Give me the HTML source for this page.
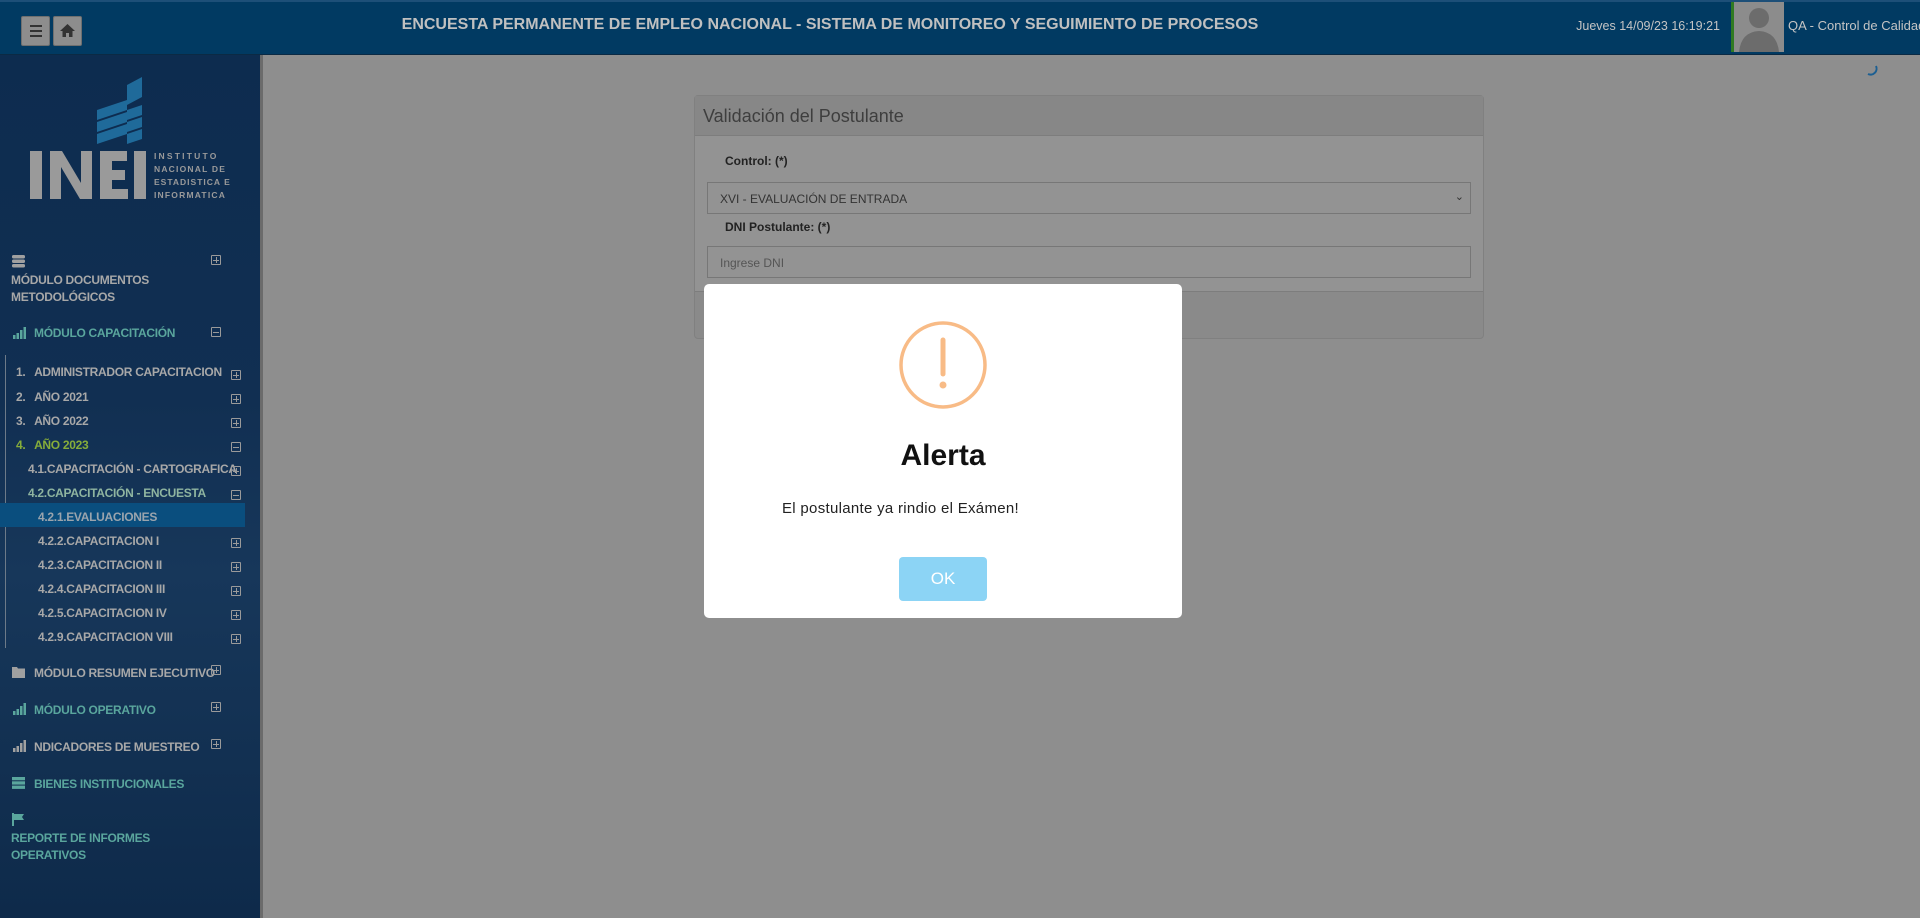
<!DOCTYPE html>
<html><head><meta charset="utf-8"><style>
*{margin:0;padding:0;box-sizing:border-box}
body{width:1920px;height:918px;overflow:hidden;background:#8e8e8e;font-family:"Liberation Sans",sans-serif;position:relative}
.hdr{position:absolute;left:0;top:0;width:1920px;height:55px;background:#013a62;border-top:2px solid #1d4f78;border-bottom:1px solid #0b2a44}
.btn{position:absolute;top:14px;width:29px;height:30px;background:#8d8d8d;border:1px solid #6f6f6f;border-radius:2px}
.title{position:absolute;left:0;width:1660px;top:14px;text-align:center;color:#c0c0c0;font-weight:bold;font-size:16px}
.side{position:absolute;left:0;top:55px;width:260px;height:863px;background:linear-gradient(180deg,#0d2c4f 0%,#112f52 40%,#17375a 60%,#0e2a4a 100%)}
.sb{position:absolute;left:260px;top:55px;width:3px;height:863px;background:#6b6b6b}
.it{position:absolute;font-weight:bold;font-size:12px;letter-spacing:-0.3px;color:#a8a8a8;white-space:nowrap}
.teal{color:#5aa69d}.grn{color:#86ad3a}
.pl{position:absolute;width:10px;height:10px;border:1px solid #9a9a9a;border-radius:1px}
.pl:before{content:"";position:absolute;left:1px;right:1px;top:3.5px;height:1px;background:#9a9a9a}
.pl.p:after{content:"";position:absolute;top:1px;bottom:1px;left:3.5px;width:1px;background:#9a9a9a}
.panel{position:absolute;left:694px;top:95px;width:790px;height:244px;border:1px solid #808080;border-radius:4px;background:#8a8a8a}
.ph{height:40px;border-bottom:1px solid #7d7d7d;color:#3e3e3e;font-size:18px;padding:10px 8px;background:#878787}
.pb{height:156px;background:#939393;border-bottom:1px solid #7d7d7d;position:relative}
.lbl{position:absolute;left:30px;font-size:12px;font-weight:bold;color:#222}
.inp{position:absolute;left:12px;width:764px;height:32px;border:1px solid #777;font-size:12px;color:#333;padding:9px 12px}
.dlg{position:absolute;left:704px;top:284px;width:478px;height:334px;background:#fff;border-radius:5px}
</style></head><body>
<div class="hdr">
 <div class="btn" style="left:21px"><div style="position:absolute;left:8px;top:8px;width:12px;height:2px;background:#333;box-shadow:0 5px 0 #333,0 10px 0 #333"></div></div>
 <div class="btn" style="left:53px"><svg width="29" height="30" viewBox="0 0 29 30" style="position:absolute;left:-1px;top:-1px"><path d="M7 15 L14.5 8 L22 15 H19.5 V21 H16 V17 H13 V21 H9.5 V15 Z" fill="#333"/></svg></div>
 <div class="title">ENCUESTA PERMANENTE DE EMPLEO NACIONAL - SISTEMA DE MONITOREO Y SEGUIMIENTO DE PROCESOS</div>
 <div style="position:absolute;right:200px;top:17px;color:#c4c4c4;font-size:12.5px">Jueves 14/09/23 16:19:21</div>
 <div style="position:absolute;left:1731px;top:0;width:53px;height:50px;background:#8c8c8c;border-left:3px solid #2f7a22;overflow:hidden">
  <svg width="50" height="50" viewBox="0 0 50 50"><circle cx="25" cy="16" r="10" fill="#6c6c6c"/><path d="M5 50 Q7 30 25 29 Q43 30 45 50Z" fill="#6c6c6c"/></svg></div>
 <div style="position:absolute;left:1788px;top:16px;color:#c4c4c4;font-size:13px;white-space:nowrap">QA - Control de Calidad</div>
</div>
<div class="side">
 <svg width="260" height="160" style="position:absolute;left:0;top:0">
  <g fill="#1f6a9a"><polygon points="127,30 142,22 142,42 127,50"/><polygon points="97,55 127,45 127,55 97,65"/><polygon points="97,67 127,57 127,67 97,77"/><polygon points="97,79 127,69 127,79 97,89"/><polygon points="127,55 142,50 142,60 127,65"/><polygon points="127,67 142,62 142,72 127,77"/><polygon points="127,79 142,74 142,84 127,89"/></g>
  <g fill="#9a9a9a"><rect x="30" y="96" width="12" height="48"/><polygon points="50,96 62,96 81,128 81,96 92,96 92,144 80,144 61,112 61,144 50,144"/><polygon points="100,96 127,96 127,106 112,106 112,115 125,115 125,125 112,125 112,134 128,134 128,144 100,144"/><rect x="134" y="96" width="12" height="48"/></g>
  <g fill="#9a9a9a" font-size="8.5" font-weight="bold" letter-spacing="2.2"><text x="154" y="104">INSTITUTO</text><text x="154" y="117" letter-spacing="1.2">NACIONAL DE</text><text x="154" y="130" letter-spacing="1">ESTADISTICA E</text><text x="154" y="143" letter-spacing="1.2">INFORMATICA</text></g>
 </svg>
</div>
<div class="sb"></div>
<div style="position:absolute;left:5px;top:355px;width:1px;height:293px;background:#6d7a88"></div>
<div style="position:absolute;left:0;top:503px;width:245px;height:24px;background:#0a4e7e"></div>
<svg width="16" height="14" style="position:absolute;left:12px;top:255px"><g fill="#a0a0a0"><rect x="0" y="0" width="13" height="3.5" rx="1.5"/><rect x="0" y="4.5" width="13" height="3.5" rx="1.5"/><rect x="0" y="9" width="13" height="3.5" rx="1.5"/></g></svg>
<div class="it" style="left:11px;top:272px;line-height:17px">MÓDULO DOCUMENTOS<br>METODOLÓGICOS</div>
<div class="pl p" style="left:211px;top:255px"></div>
<svg width="14" height="12" style="position:absolute;left:13px;top:327px"><g fill="#5aa69d"><rect x="0" y="8" width="2.5" height="4"/><rect x="3.5" y="6" width="2.5" height="6"/><rect x="7" y="3" width="2.5" height="9"/><rect x="10.5" y="0" width="2.5" height="12"/></g></svg>
<div class="it teal" style="left:34px;top:326px">MÓDULO CAPACITACIÓN</div>
<div class="pl" style="left:211px;top:327px"></div>
<div class="it" style="left:16px;top:365px">1.&nbsp;&nbsp; ADMINISTRADOR CAPACITACION</div><div class="pl p" style="left:231px;top:370px"></div>
<div class="it" style="left:16px;top:390px">2.&nbsp;&nbsp; AÑO 2021</div><div class="pl p" style="left:231px;top:394px"></div>
<div class="it" style="left:16px;top:414px">3.&nbsp;&nbsp; AÑO 2022</div><div class="pl p" style="left:231px;top:418px"></div>
<div class="it grn" style="left:16px;top:438px">4.&nbsp;&nbsp; AÑO 2023</div><div class="pl" style="left:231px;top:442px"></div>
<div class="it" style="left:28px;top:462px">4.1.CAPACITACIÓN - CARTOGRAFICA</div><div class="pl p" style="left:231px;top:466px"></div>
<div class="it" style="left:28px;top:486px;color:#8fb5a0">4.2.CAPACITACIÓN - ENCUESTA</div><div class="pl" style="left:231px;top:490px"></div>
<div class="it" style="left:38px;top:510px;color:#9aa4ad">4.2.1.EVALUACIONES</div>
<div class="it" style="left:38px;top:534px">4.2.2.CAPACITACION I</div><div class="pl p" style="left:231px;top:538px"></div>
<div class="it" style="left:38px;top:558px">4.2.3.CAPACITACION II</div><div class="pl p" style="left:231px;top:562px"></div>
<div class="it" style="left:38px;top:582px">4.2.4.CAPACITACION III</div><div class="pl p" style="left:231px;top:586px"></div>
<div class="it" style="left:38px;top:606px">4.2.5.CAPACITACION IV</div><div class="pl p" style="left:231px;top:610px"></div>
<div class="it" style="left:38px;top:630px">4.2.9.CAPACITACION VIII</div><div class="pl p" style="left:231px;top:634px"></div>
<svg width="14" height="12" style="position:absolute;left:12px;top:666px"><path d="M0 1 H5 L6 2.5 H13 V12 H0Z" fill="#a0a0a0"/></svg>
<div class="it" style="left:34px;top:666px">MÓDULO RESUMEN EJECUTIVO</div><div class="pl p" style="left:211px;top:665px"></div>
<svg width="14" height="12" style="position:absolute;left:13px;top:703px"><g fill="#5aa69d"><rect x="0" y="8" width="2.5" height="4"/><rect x="3.5" y="6" width="2.5" height="6"/><rect x="7" y="3" width="2.5" height="9"/><rect x="10.5" y="0" width="2.5" height="12"/></g></svg>
<div class="it teal" style="left:34px;top:703px">MÓDULO OPERATIVO</div><div class="pl p" style="left:211px;top:702px"></div>
<svg width="14" height="12" style="position:absolute;left:13px;top:740px"><g fill="#a0a0a0"><rect x="0" y="8" width="2.5" height="4"/><rect x="3.5" y="6" width="2.5" height="6"/><rect x="7" y="3" width="2.5" height="9"/><rect x="10.5" y="0" width="2.5" height="12"/></g></svg>
<div class="it" style="left:34px;top:740px">NDICADORES DE MUESTREO</div><div class="pl p" style="left:211px;top:739px"></div>
<svg width="14" height="12" style="position:absolute;left:12px;top:777px"><g fill="#5aa69d"><rect x="0" y="0" width="13" height="3.3"/><rect x="0" y="4.3" width="13" height="3.3"/><rect x="0" y="8.6" width="13" height="3.3"/></g></svg>
<div class="it teal" style="left:34px;top:777px">BIENES INSTITUCIONALES</div>
<svg width="14" height="14" style="position:absolute;left:12px;top:813px"><rect x="0" y="0" width="2" height="13" fill="#5aa69d"/><path d="M2 1 H12 L10 4 L12 7 H2Z" fill="#5aa69d"/></svg>
<div class="it teal" style="left:11px;top:830px;line-height:17px">REPORTE DE INFORMES<br>OPERATIVOS</div>

<svg width="16" height="16" style="position:absolute;left:1864px;top:62px"><path d="M12 4 A6 6 0 0 1 4 12" stroke="#1c5f92" stroke-width="2" fill="none"/></svg>

<div class="panel">
 <div class="ph">Validación del Postulante</div>
 <div class="pb">
  <div class="lbl" style="top:18px">Control: (*)</div>
  <div class="inp" style="top:46px">XVI - EVALUACIÓN DE ENTRADA<span style="position:absolute;right:6px;top:7px;font-size:11px">&#8964;</span></div>
  <div class="lbl" style="top:84px">DNI Postulante: (*)</div>
  <div class="inp" style="top:110px;color:#555">Ingrese DNI</div>
 </div>
</div>

<div class="dlg">
 <svg width="90" height="90" style="position:absolute;left:194px;top:36px"><circle cx="45" cy="45" r="42" stroke="#f8bb86" stroke-width="3.5" fill="none"/><line x1="45" y1="20" x2="45" y2="54" stroke="#f8bb86" stroke-width="5" stroke-linecap="round"/><circle cx="45" cy="65" r="3.5" fill="#f8bb86"/></svg>
 <div style="position:absolute;left:0;width:478px;top:155px;text-align:center;font-size:30px;font-weight:bold;color:#111">Alerta</div>
 <div style="position:absolute;left:78px;top:216px;font-size:15px;color:#222;letter-spacing:0.3px">El postulante ya rindio el Exámen!</div>
 <div style="position:absolute;left:195px;top:273px;width:88px;height:44px;background:#8cd4f5;border-radius:4px;color:#fff;font-size:17px;text-align:center;line-height:44px">OK</div>
</div>
</body></html>
